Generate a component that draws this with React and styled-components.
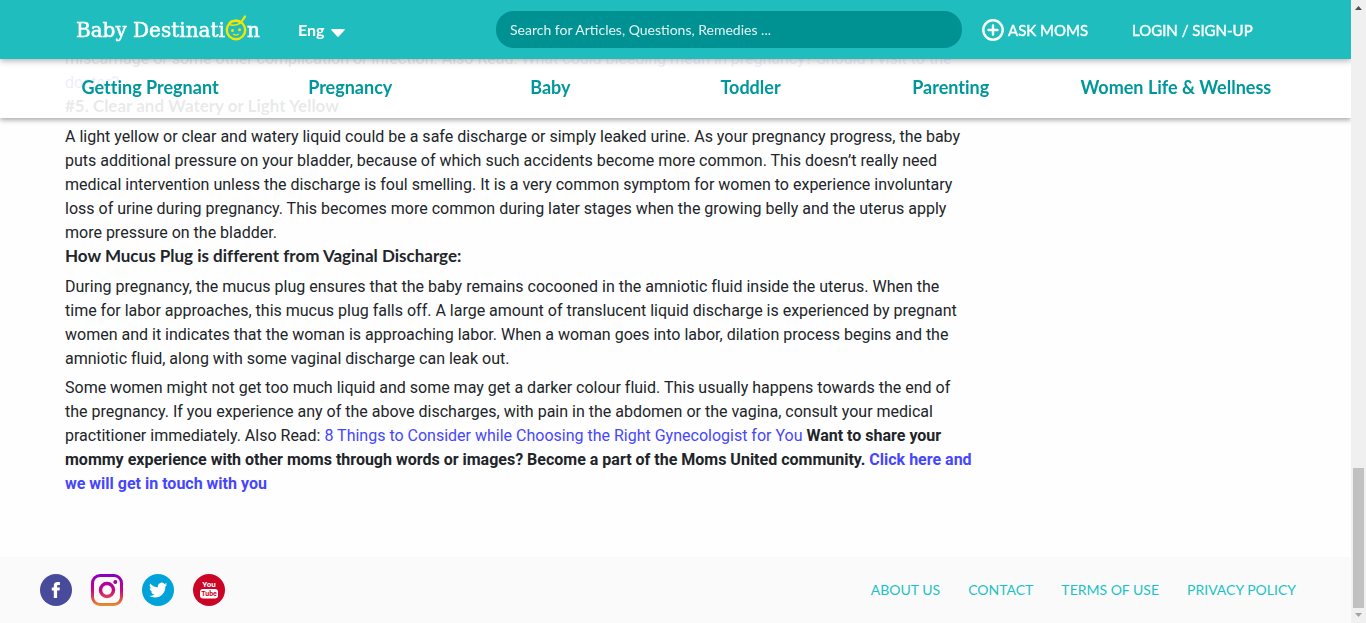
import React from 'react';
import styled, { createGlobalStyle } from 'styled-components';

const GlobalStyle = createGlobalStyle`
  *, *::before, *::after { box-sizing: border-box; }
  html { scrollbar-width: none; }
  body {
    margin: 0;
    background: #fefefe;
    color: #212529;
    font-family: Roboto, 'Liberation Sans', sans-serif;
    font-size: 16px;
    line-height: 24px;
    font-variant-ligatures: none;
  }
  a { text-decoration: none; }
`;

const uiFont = "Lato, 'Open Sans', sans-serif";

const Page = styled.div`
  display: flex;
  flex-direction: column;
  min-height: 100vh;
  padding-right: 15px;
`;

const FixedTop = styled.div`
  position: fixed;
  top: 0;
  left: 0;
  right: 15px;
  z-index: 2;
  font-family: ${uiFont};
`;

const Header = styled.header`
  position: relative;
  z-index: 1;
  display: grid;
  grid-template-columns: 222px 198px 1fr 170px 122px;
  align-items: center;
  height: 59px;
  padding: 0 97px 0 76px;
  background: #20bdbe;
  box-shadow: 0 2px 6px rgba(0, 0, 0, 0.3);
`;

const Logo = styled.a`
  display: flex;
  align-items: center;
  color: #fff;
  font-family: 'DejaVu Serif', serif;
  font-size: 20px;
  font-weight: 400;
  line-height: 30px;
  -webkit-text-stroke: 0.5px #fff;
  white-space: nowrap;

  svg { margin-bottom: 4px; }
`;

const Language = styled.label`
  display: flex;
  align-items: center;
  gap: 3px;

  svg { margin-top: 6px; }
`;

const LanguageSelect = styled.select`
  appearance: none;
  width: 30px;
  padding: 0;
  border: 0;
  background: none;
  color: #fff;
  font: 700 16px/24px ${uiFont};
`;

const Search = styled.input`
  width: 100%;
  height: 37px;
  padding: 0 14px;
  border: 0;
  border-radius: 18px;
  outline: 0;
  background: #009193;
  color: #fff;
  font: 400 14px/20px ${uiFont};

  &::placeholder { color: #e4f5f5; opacity: 1; }
`;

const HeaderLink = styled.a`
  display: flex;
  align-items: center;
  gap: 4px;
  padding-left: ${(p) => (p.$inset ? '20px' : '0')};
  color: #fff;
  font-size: 15px;
  font-weight: 400;
  -webkit-text-stroke: 0.4px #fff;
  white-space: nowrap;
`;

const Nav = styled.nav`
  display: grid;
  grid-template-columns: repeat(5, 4fr) 5fr;
  align-items: center;
  height: 59px;
  padding: 0 50px 3px;
  background: rgba(255, 255, 255, 0.9);
  box-shadow: 0 2px 5px rgba(0, 0, 0, 0.35);
`;

const NavLink = styled.a`
  color: #00979b;
  font-size: 18px;
  font-weight: 700;
  text-align: center;
  white-space: nowrap;
`;

const Article = styled.main`
  flex: 1;
  max-width: 1037px;
  padding: 47px 64px 56px 65px;
`;

const Heading = styled.h2`
  margin: 0 0 8px;
  font-family: ${uiFont};
  font-size: 17px;
  font-weight: 700;
  line-height: 22px;
`;

const Paragraph = styled.p`
  margin: 0 0 ${(p) => (p.$tight ? '0' : '5px')};
`;

const TextLink = styled.a`
  color: #4646ff;
`;

const Footer = styled.footer`
  display: flex;
  align-items: center;
  justify-content: space-between;
  height: 66px;
  padding: 0 55px 0 40px;
  background: #fafafa;
  font-family: ${uiFont};
`;

const Social = styled.div`
  display: flex;
  gap: 19px;

  a, svg { display: block; }
`;

const FooterLinks = styled.nav`
  display: flex;
  gap: 28px;
`;

const FooterLink = styled.a`
  color: #1cc2c4;
  font-size: 14px;
`;

const ScrollTrack = styled.div`
  position: fixed;
  top: 0;
  right: 0;
  bottom: 0;
  z-index: 3;
  display: flex;
  flex-direction: column;
  align-items: center;
  width: 15px;
  padding: 4px 0;
  background: #f0f0f0;
`;

const ScrollThumb = styled.div`
  width: 11px;
  height: 140px;
  margin: auto 0 4px;
  background: #c1c1c1;
`;

const BabyFace = () => (
  <svg width="22" height="26" viewBox="0 0 22 26" fill="none" stroke="#f3e600" strokeLinecap="round" aria-hidden="true">
    <circle cx="11" cy="15" r="9.200" strokeWidth="2.400" />
    <ellipse cx="9.500" cy="7.800" rx="5.200" ry="2.300" transform="rotate(-8 9.500 7.800)" strokeWidth="1.600" />
    <path d="M14.500 8c2.500-.8 3-3 5.500-6.500" strokeWidth="2.200" />
    <path d="M8.500 19.300c1.400 1 3.400 1 4.800 0" strokeWidth="1.400" />
    <circle cx="7.500" cy="15.500" r="1.500" fill="#f3e600" stroke="none" />
    <circle cx="14.500" cy="14.800" r="1.500" fill="#f3e600" stroke="none" />
  </svg>
);

const PlusCircle = () => (
  <svg width="22" height="22" viewBox="0 0 22 22" fill="none" stroke="#fff" aria-hidden="true">
    <circle cx="11" cy="11" r="9.700" strokeWidth="2.400" />
    <path d="M11 6.500v9M6.500 11h9" strokeWidth="2.400" strokeLinecap="round" />
  </svg>
);

const Facebook = () => (
  <svg width="32" height="32" viewBox="0 0 32 32" aria-hidden="true">
    <circle cx="16" cy="16" r="16" fill="#484b9b" />
    <path d="M13.800 24v-7.500h-2V13.600h2v-1.900c0-2.500 1.300-3.700 3.700-3.700h2.400v2.900h-1.500c-1 0-1.300.4-1.300 1.300v1.400h2.800l-.4 2.900h-2.400V24z" fill="#fff" />
  </svg>
);

const Instagram = () => (
  <svg width="32" height="32" viewBox="0 0 32 32" fill="none" aria-hidden="true">
    <defs>
      <linearGradient id="insta" gradientUnits="userSpaceOnUse" x1="0" y1="0" x2="0" y2="32">
        <stop offset="0" stopColor="#8500c4" />
        <stop offset="0.5" stopColor="#cc0086" />
        <stop offset="0.8" stopColor="#dd5545" />
        <stop offset="1" stopColor="#e59430" />
      </linearGradient>
    </defs>
    <rect x="1.500" y="1.500" width="29" height="29" rx="7.500" stroke="url(#insta)" strokeWidth="3" />
    <circle cx="16" cy="16" r="6.500" stroke="url(#insta)" strokeWidth="3.400" />
    <circle cx="24.300" cy="8" r="2" fill="url(#insta)" />
  </svg>
);

const Twitter = () => (
  <svg width="32" height="32" viewBox="0 0 32 32" aria-hidden="true">
    <circle cx="16" cy="16" r="16" fill="#00a3d9" />
    <g transform="translate(7 7) scale(0.760)">
      <path fill="#fff" d="M23.953 4.570a10 10 0 01-2.825.775 4.958 4.958 0 002.163-2.723c-.951.555-2.005.959-3.127 1.184a4.920 4.920 0 00-8.384 4.482C7.690 8.095 4.067 6.130 1.640 3.162a4.822 4.822 0 00-.666 2.475c0 1.710.870 3.213 2.188 4.096a4.904 4.904 0 01-2.228-.616v.060a4.923 4.923 0 003.946 4.827 4.996 4.996 0 01-2.212.085 4.936 4.936 0 004.604 3.417 9.867 9.867 0 01-6.102 2.105c-.390 0-.779-.023-1.170-.067a13.995 13.995 0 007.557 2.209c9.053 0 13.998-7.496 13.998-13.985 0-.210 0-.420-.015-.630A9.935 9.935 0 0024 4.590z" />
    </g>
  </svg>
);

const YouTube = () => (
  <svg width="32" height="32" viewBox="0 0 32 32" fontFamily="Roboto, sans-serif" fontWeight="700" textAnchor="middle" aria-hidden="true">
    <circle cx="16" cy="16" r="16" fill="#cc0426" />
    <text x="16" y="13" fontSize="8" fill="#fff">You</text>
    <rect x="7" y="15" width="18" height="9.500" rx="3" fill="#fff" />
    <text x="16" y="22" fontSize="7" fill="#cc0426">Tube</text>
  </svg>
);

const sections = ['Getting Pregnant', 'Pregnancy', 'Baby', 'Toddler', 'Parenting', 'Women Life & Wellness'];

const networks = [
  ['Facebook', Facebook],
  ['Instagram', Instagram],
  ['Twitter', Twitter],
  ['YouTube', YouTube],
];

const footerLinks = ['ABOUT US', 'CONTACT', 'TERMS OF USE', 'PRIVACY POLICY'];

export default function App() {
  return (
    <>
      <GlobalStyle />
      <Page>
        <FixedTop>
          <Header>
            <Logo href="#" aria-label="Baby Destination">
              <span>Baby Destinati</span>
              <BabyFace />
              <span>n</span>
            </Logo>
            <Language>
              <LanguageSelect aria-label="Language" defaultValue="Eng">
                <option>Eng</option>
              </LanguageSelect>
              <svg width="14" height="8" viewBox="0 0 14 8" aria-hidden="true">
                <path d="M1 0h12c1 0 1 .8.500 1.300L8 7.300c-.600.700-1.400.700-2 0L.500 1.300C0 .8 0 0 1 0z" fill="#fff" />
              </svg>
            </Language>
            <Search type="search" aria-label="Search" placeholder="Search for Articles, Questions, Remedies ..." />
            <HeaderLink href="#" $inset>
              <PlusCircle />
              ASK MOMS
            </HeaderLink>
            <HeaderLink href="#">LOGIN / SIGN-UP</HeaderLink>
          </Header>
          <Nav aria-label="Sections">
            {sections.map((name) => (
              <NavLink key={name} href="#">{name}</NavLink>
            ))}
          </Nav>
        </FixedTop>

        <Article>
          <Paragraph $tight>
            miscarriage or some other complication or infection. Also Read:{' '}
            <TextLink href="#">What could bleeding mean in pregnancy? Should I visit to the doctor?</TextLink>
          </Paragraph>
          <Heading>#5. Clear and Watery or Light Yellow</Heading>
          <Paragraph $tight>
            A light yellow or clear and watery liquid could be a safe discharge or simply leaked urine. As your
            pregnancy progress, the baby puts additional pressure on your bladder, because of which such accidents
            become more common. This doesn’t really need medical intervention unless the discharge is foul smelling.
            It is a very common symptom for women to experience involuntary loss of urine during pregnancy. This
            becomes more common during later stages when the growing belly and the uterus apply more pressure on the
            bladder.
          </Paragraph>
          <Heading>How Mucus Plug is different from Vaginal Discharge:</Heading>
          <Paragraph>
            During pregnancy, the mucus plug ensures that the baby remains cocooned in the amniotic fluid inside the
            uterus. When the time for labor approaches, this mucus plug falls off. A large amount of translucent
            liquid discharge is experienced by pregnant women and it indicates that the woman is approaching labor.
            When a woman goes into labor, dilation process begins and the amniotic fluid, along with some vaginal
            discharge can leak out.
          </Paragraph>
          <Paragraph>
            Some women might not get too much liquid and some may get a darker colour fluid. This usually happens
            towards the end of the pregnancy. If you experience any of the above discharges, with pain in the abdomen
            or the vagina, consult your medical practitioner immediately. Also Read:{' '}
            <TextLink href="#">8 Things to Consider while Choosing the Right Gynecologist for You</TextLink>{' '}
            <strong>
              Want to share your mommy experience with other moms through words or images? Become a part of the Moms
              United community. <TextLink href="#">Click here and we will get in touch with you</TextLink>
            </strong>
          </Paragraph>
        </Article>

        <Footer>
          <Social>
            {networks.map(([name, Icon]) => (
              <a key={name} href="#" aria-label={name}>
                <Icon />
              </a>
            ))}
          </Social>
          <FooterLinks aria-label="Footer">
            {footerLinks.map((name) => (
              <FooterLink key={name} href="#">{name}</FooterLink>
            ))}
          </FooterLinks>
        </Footer>
      </Page>

      <ScrollTrack aria-hidden="true">
        <svg width="7" height="10" viewBox="0 0 7 10">
          <path d="M0 6l3.500-4L7 6z" fill="#505050" />
        </svg>
        <ScrollThumb />
        <svg width="7" height="7" viewBox="0 0 7 7">
          <path d="M0 1h7L3.500 5z" fill="#a3a3a3" />
        </svg>
      </ScrollTrack>
    </>
  );
}
